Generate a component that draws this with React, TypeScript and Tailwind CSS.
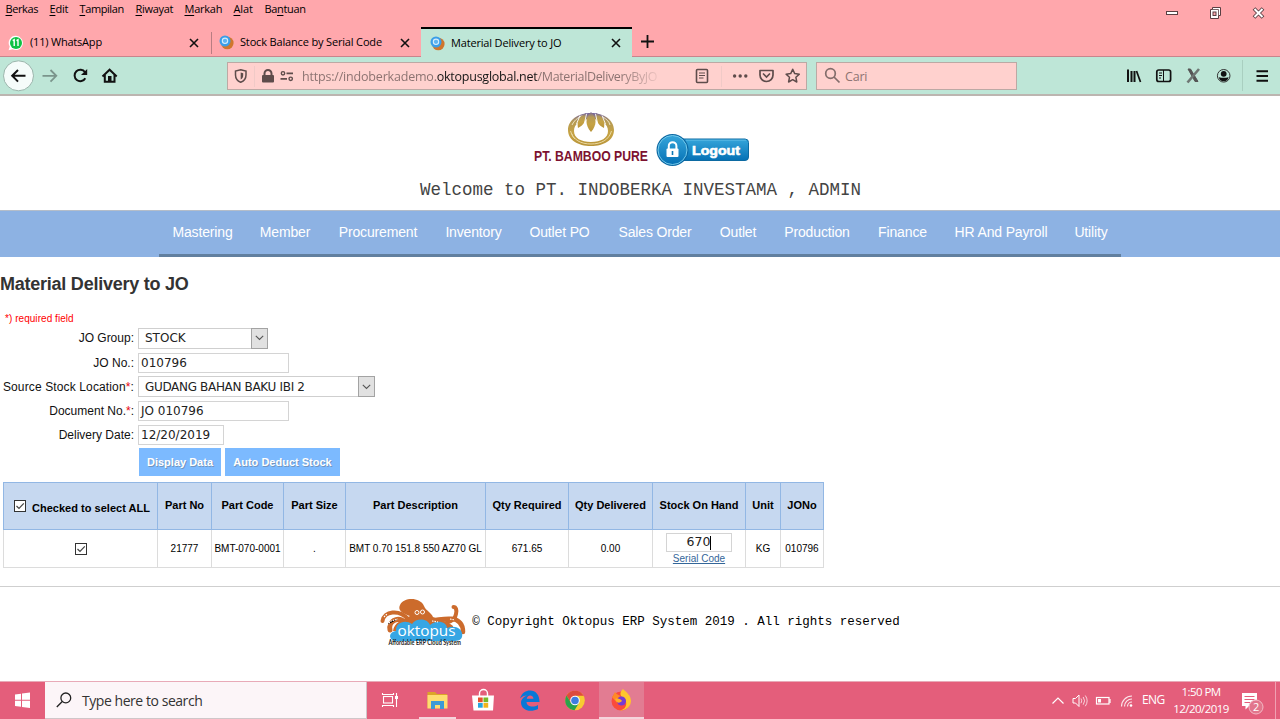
import React from "react";

const ui = "font-['Open_Sans','Noto_Sans',sans-serif]";
const arial = "font-['Liberation_Sans',Arial,sans-serif]";
const verdana = "font-['DejaVu_Sans',Verdana,sans-serif]";
const mono = "font-['Liberation_Mono','Courier_New',monospace]";

const menus = [
  { pre: "", key: "B", post: "erkas", w: "w-[44px]", t: "tracking-[-0.4px]" },
  { pre: "", key: "E", post: "dit", w: "w-[30px]", t: "tracking-[-0.2px]" },
  { pre: "", key: "T", post: "ampilan", w: "w-[56px]", t: "tracking-[-0.4px]" },
  { pre: "", key: "R", post: "iwayat", w: "w-[49px]", t: "tracking-[-0.3px]" },
  { pre: "", key: "M", post: "arkah", w: "w-[49px]", t: "tracking-[-0.25px]" },
  { pre: "", key: "A", post: "lat", w: "w-[31px]", t: "tracking-[-0.1px]" },
  { pre: "Ba", key: "n", post: "tuan", w: "w-[60px]", t: "tracking-[-0.35px]" },
];

const navItems = [
  ["Mastering", "w-[87px]"],
  ["Member", "w-[78px]"],
  ["Procurement", "w-[108px]"],
  ["Inventory", "w-[83px]"],
  ["Outlet PO", "w-[89px]"],
  ["Sales Order", "w-[102px]"],
  ["Outlet", "w-[64px]"],
  ["Production", "w-[94px]"],
  ["Finance", "w-[77px]"],
  ["HR And Payroll", "w-[120px]"],
  ["Utility", "w-[60px]"],
];

function CloseX() {
  return (
    <svg width="10" height="10" viewBox="0 0 10 10" className="shrink-0">
      <path d="M1 1L9 9M9 1L1 9" stroke="#111" strokeWidth="1.6" />
    </svg>
  );
}

function OktoFavicon() {
  return (
    <svg width="15" height="15" viewBox="0 0 15 15" className="shrink-0">
      <circle cx="8.3" cy="8" r="6.3" fill="#d0762c" />
      <circle cx="6" cy="6" r="5.5" fill="#3a9ee8" />
      <circle cx="6" cy="5.8" r="2.700" fill="#5db4f2" stroke="#d5ecfb" strokeWidth="1.1" />
    </svg>
  );
}

function Browser() {
  return (
    <header className={`${ui} h-24 w-full text-black`}>
      <div className="flex h-[27px] bg-[#ffa7ac]">
        <nav className="flex flex-1 pt-[1px] pl-[5.500px] text-[11px] leading-[15px]">
          {menus.map((m) => (
            <span key={m.key + m.post} className={`${m.w} ${m.t} whitespace-nowrap`}>
              {m.pre}
              <span className="underline underline-offset-2">{m.key}</span>
              {m.post}
            </span>
          ))}
        </nav>
        <svg width="120" height="27" viewBox="1160 0 120 27">
          <rect x="1166.500" y="11.500" width="11" height="3" fill="#fff" stroke="#5a3f43" />
          <path d="M1212.500 7.500H1220.500V15.500H1218.500V18.500H1210.500V9.500H1212.500Z" fill="#fff" stroke="#5a3f43" />
          <path d="M1212.500 9.500H1218.500V15.500" fill="none" stroke="#5a3f43" strokeWidth=".8" />
          <rect x="1213" y="12" width="3" height="3.500" fill="#ffa7ac" stroke="#5a3f43" />
          <path d="M1254 8.500L1263 17.500M1263 8.500L1254 17.500" stroke="#5a3f43" strokeWidth="3.800" />
          <path d="M1254.500 9L1262.500 17M1262.500 9L1254.500 17" stroke="#fff" strokeWidth="2" />
        </svg>
      </div>

      <div className="flex h-[30px] border-b border-[#c9848c] bg-[#ffa7ac] text-[11px]">
        <div className="flex w-[211px] items-center pl-2 pr-[12px] pt-[2px]">
          <svg width="16" height="16" viewBox="0 0 16 16">
            <path d="M8 .8A7.100 7.100 0 1 1 4.500 14.200L.6 15.200L1.700 11.500A7.100 7.100 0 0 1 8 .8Z" fill="#fff" />
            <circle cx="8" cy="7.900" r="6" fill="#0fc143" />
            <path d="M4.700 5.700L6.200 4.800V11M8.500 5.700L10 4.800V11" fill="none" stroke="#fff" strokeWidth="1.400" />
          </svg>
          <span className="ml-[6px] flex-1 whitespace-nowrap tracking-[-0.2px]">(11) WhatsApp</span>
          <CloseX />
        </div>
        <div className="flex w-[210px] items-center pr-[11px] pt-[2px]">
          <span className="h-[22px] w-px bg-[#b87d82]" />
          <span className="ml-[7px]">
            <OktoFavicon />
          </span>
          <span className="ml-[6px] flex-1 whitespace-nowrap tracking-[-0.16px]">Stock Balance by Serial Code</span>
          <CloseX />
        </div>
        <div className="-mb-px flex h-[30px] w-[211px] items-center border-t-2 border-black bg-[#bee6d7] pl-[9px] pr-[11px]">
          <OktoFavicon />
          <span className="ml-[6px] flex-1 whitespace-nowrap tracking-[-0.17px]">Material Delivery to JO</span>
          <CloseX />
        </div>
        <svg width="30" height="29" viewBox="0 0 30 29">
          <path d="M15.500 8V21M9 14.500H22" stroke="#111" strokeWidth="1.800" />
        </svg>
      </div>

      <div className="flex h-[39px] items-center border-b-2 border-[#bcb5b0] bg-[#bee6d7]">
        <svg width="227" height="37" viewBox="0 57 227 37" fill="none" stroke="#111">
          <circle cx="18.500" cy="75.800" r="15" fill="#f5fcfa" stroke="#9ab5ab" />
          <path d="M25.500 75.800H12.500M18 70L12.200 75.800L18 81.600" strokeWidth="2" />
          <path d="M42.500 75.800H56M50.500 70L56.300 75.800L50.500 81.600" stroke="#7b958c" strokeWidth="1.800" />
          <path d="M85 72.200A5.700 5.700 0 1 0 85.300 78.200" strokeWidth="2" />
          <path d="M87.200 69V75H81Z" fill="#111" stroke="none" />
          <path d="M102.500 76.500L109.600 69.700L116.700 76.500" strokeWidth="2" />
          <path d="M104.800 75V81.800H114.500V75" strokeWidth="2" />
          <rect x="108" y="76" width="3.500" height="6" fill="#111" stroke="none" />
        </svg>
        <div className="flex h-[28px] w-[580px] shrink-0 items-center border border-[#bca9a4] bg-[#ffd1ce]">
          <svg width="74" height="26" viewBox="228 63 74 26" fill="none" stroke="#5e4c4b">
            <path d="M240.700 69.700L246 71V75C246 79 243.500 81.200 240.700 82.300C238 81.200 235.500 79 235.500 75V71Z" strokeWidth="1.500" />
            <path d="M240.700 72.500V79.500C242.500 78.500 243.200 77 243.200 75V73.200Z" fill="#5e4c4b" stroke="none" />
            <path d="M254.500 66V87" stroke="#f0cac7" />
            <rect x="262" y="75" width="12" height="7.500" rx="1" fill="#5e4c4b" stroke="none" />
            <path d="M264.500 75.500V73.500A3.500 3.500 0 0 1 271.500 73.500V75.500" strokeWidth="2" />
            <circle cx="283" cy="73.300" r="1.700" strokeWidth="1.400" />
            <circle cx="290.700" cy="78.800" r="1.700" strokeWidth="1.400" />
            <path d="M286.500 73.300H293M280.500 78.800H287" strokeWidth="1.800" />
          </svg>
          <div className="w-[361px] overflow-hidden whitespace-nowrap pt-[3px] text-[12.500px] text-[#8d7472] [mask-image:linear-gradient(to_right,black_88%,transparent)]">
            <span className="tracking-[-0.19px]">https://indoberkademo.</span>
            <span className="tracking-[-0.25px] text-[#151515]">oktopusglobal.net</span>
            <span className="tracking-[-0.35px]">/MaterialDeliveryByJO</span>
          </div>
          <svg width="143" height="26" viewBox="663 63 143 26" fill="none" stroke="#5e4c4b">
            <rect x="696.500" y="69.500" width="11" height="13" rx="1" strokeWidth="1.600" />
            <path d="M699 73H705M699 75.500H705M699 78H703.500" strokeWidth="1" />
            <path d="M721.500 66V87" stroke="#f0cac7" />
            <g fill="#5e4c4b" stroke="none">
              <circle cx="734.600" cy="76" r="1.700" />
              <circle cx="740.200" cy="76" r="1.700" />
              <circle cx="745.800" cy="76" r="1.700" />
            </g>
            <path d="M760 70.500H773V75A6.500 6.500 0 0 1 760 75Z" strokeWidth="1.700" strokeLinejoin="round" />
            <path d="M763.500 74L766.500 77L769.500 74" strokeWidth="1.700" strokeLinecap="round" />
            <path d="M792.700 69.300L794.700 73.600L799.300 74.200L795.900 77.300L796.800 82L792.700 79.700L788.600 82L789.500 77.300L786.100 74.200L790.700 73.600Z" strokeWidth="1.500" strokeLinejoin="round" />
          </svg>
        </div>
        <div className="ml-[9px] flex h-[28px] w-[201px] shrink-0 items-center border border-[#bca9a4] bg-[#ffd1ce] pl-[7px]">
          <svg width="17" height="17" viewBox="0 0 17 17" fill="none" stroke="#836d6b" strokeWidth="1.700">
            <circle cx="6.500" cy="6.500" r="4.800" />
            <path d="M10 10L15.500 15.500" />
          </svg>
          <span className="ml-[4px] pt-[3px] text-[12.500px] tracking-[-0.2px] text-[#8d7472]">Cari</span>
        </div>
        <svg width="263" height="37" viewBox="1017 57 263 37" fill="none" stroke="#111">
          <path d="M1128 69.500V82M1131.500 71V82M1134.500 71V82" strokeWidth="2" />
          <path d="M1136.500 71L1140.500 82" strokeWidth="1.700" />
          <rect x="1156.800" y="70" width="13.800" height="11.500" rx="2" strokeWidth="1.700" />
          <path d="M1163.500 70V81M1159 73H1162M1159 75.500H1162M1159 78H1161" strokeWidth="1" />
          <path d="M1188 69H1190.500L1198 81.500H1195Z" fill="#555" stroke="#555" />
          <path d="M1199 69L1187.500 82.500" stroke="#6f7774" strokeWidth="2.600" />
          <circle cx="1223.700" cy="75.800" r="6.300" stroke="#333" strokeWidth="1" />
          <circle cx="1223.700" cy="73.800" r="2.900" fill="#111" stroke="none" />
          <path d="M1218.800 77.200Q1223.700 78.500 1228.600 77.200A5 5 0 0 1 1218.800 77.200Z" fill="#111" stroke="none" />
          <path d="M1242.500 60V91" stroke="#a9cfc0" />
          <path d="M1256.500 71.200H1268M1256.500 76H1268M1256.500 80.800H1268" strokeWidth="1.900" />
        </svg>
      </div>
    </header>
  );
}

function BambooLogo() {
  return (
    <svg width="48" height="36" viewBox="0 0 48 36">
      <defs>
        <linearGradient id="gold" x1="0" y1="0" x2="0" y2="1">
          <stop offset="0" stopColor="#75659f" />
          <stop offset=".25" stopColor="#b59a55" />
          <stop offset=".6" stopColor="#c6a344" />
          <stop offset="1" stopColor="#b8943a" />
        </linearGradient>
      </defs>
      <path fillRule="evenodd" d="M24 1C37 1 47 8 47 18S37 34 24 34S1 28 1 18S11 1 24 1ZM24 7C13 7 7 12 7 19C7 26 14 30 24 30S41 26 41 19C41 12 35 7 24 7Z" fill="url(#gold)" />
      <path d="M3.500 19C6 28 14 32 24 32S42 28 44.500 19M5 22C5 24 7 26 8 27" fill="none" stroke="#ead9a0" strokeWidth="1" />
      <path d="M5 13C8 7 13 4 18 3M43 13C42 9 39 7 36 5" fill="none" stroke="#efe4c2" strokeWidth="1" />
      <path d="M24 0C18 6 18 13 24 20C30 13 30 6 24 0Z" fill="url(#gold)" />
      <path d="M19 1C11 5 10 10 11 16C17 13 20 8 19 1ZM29 1C37 5 38 10 37 16C31 13 28 8 29 1Z" fill="url(#gold)" />
      <path d="M19.500 2L17.500 11M28.500 2L30.500 11M13 3.500L9.500 12M35 3.500L38.500 12" stroke="#fff" strokeWidth=".9" />
    </svg>
  );
}

function LogoutButton() {
  return (
    <svg width="94" height="34" viewBox="0 0 94 34">
      <defs>
        <linearGradient id="lg" x1="0" y1="0" x2="0" y2="1">
          <stop offset="0" stopColor="#35a5da" />
          <stop offset="1" stopColor="#0571b5" />
        </linearGradient>
      </defs>
      <rect x="20" y="6" width="72.500" height="21.500" rx="3.500" fill="url(#lg)" stroke="#0c6aa2" />
      <path d="M30 7.200H90" stroke="#64c0e8" strokeWidth=".8" />
      <circle cx="16.500" cy="17" r="16" fill="#0b68a3" />
      <circle cx="16.500" cy="17" r="14.500" fill="url(#lg)" stroke="#7fd2f1" strokeWidth=".9" />
      <rect x="10.500" y="15.500" width="12" height="8.500" rx="1" fill="#fff" />
      <path d="M12.800 16V13A3.800 3.800 0 0 1 20.400 13V16" fill="none" stroke="#fff" strokeWidth="2" />
      <path d="M16.500 18V22" stroke="#0d78b6" strokeWidth="1.600" />
      <text x="36" y="21.500" fill="#fff" stroke="#fff" strokeWidth=".6" className={arial} fontWeight="700" fontSize="12.500" textLength="48" lengthAdjust="spacingAndGlyphs">Logout</text>
    </svg>
  );
}

function OktopusLogo() {
  return (
    <svg width="88" height="50" viewBox="380 597 88 50">
      <g fill="none" stroke="#cc6b2c" strokeLinecap="round">
        <path d="M408 619C399 609 384 611 382.500 621" strokeWidth="4" />
        <path d="M406 623C397 615 388 622 390 630" strokeWidth="5" />
        <path d="M424 621C440 628 455 622 456 614C457 610 456 607 453.500 607" strokeWidth="4" />
        <path d="M424 622C444 618 463 614 463 632" strokeWidth="4.500" />
      </g>
      <path d="M400 605C404 597 420 597 424 606C426 611 431 612 433 617C440 620 447 621 453 626V631H393C394 622 403 620 410 616C404 614 397 611 400 605Z" fill="#cc6b2c" />
      <path d="M397 641C388 641 388 632 396 631C395 623 405 619 412 624C416 618 427 618 430 625C437 619 447 622 447 628C456 624 464 630 462 637C461 641 456 641 452 641Z" fill="#36a6e4" />
      <g stroke="#fff" strokeWidth="1" fill="#cc6b2c">
        <circle cx="417" cy="612.500" r="2" />
        <circle cx="422.500" cy="612" r="2" />
      </g>
      <path d="M384 617L387 614M387 625L391 621L398 619M452 613H454M450 619L455 620M432 621L438 622" stroke="#fff" strokeWidth="1.200" strokeDasharray="1.500 1" />
      <text x="397.500" y="635.500" fill="#fff" className={ui} fontWeight="500" fontSize="15" textLength="58" lengthAdjust="spacingAndGlyphs">oktopus</text>
      <text x="388.500" y="645" fill="#222" className="font-['Lato',sans-serif]" fontWeight="700" fontSize="6.500" textLength="72.500" lengthAdjust="spacingAndGlyphs">Affordable ERP Cloud System</text>
    </svg>
  );
}

function Select({ value, width, tracking = "" }: { value: string; width: string; tracking?: string }) {
  return (
    <div className={`${verdana} ${width} ${tracking} flex h-[21px] items-center border border-[#cfcfcf] bg-white pl-[6px] text-[12px] text-[#222]`}>
      <span className="flex-1 whitespace-nowrap">{value}</span>
      <span className="-my-px -mr-px flex h-[21px] w-[17px] items-center justify-center border border-[#a3a3a3] bg-[#e1e1e1]">
        <svg width="9" height="6" viewBox="0 0 9 6">
          <path d="M.8.8L4.500 4.500L8.200.8" fill="none" stroke="#555" strokeWidth="1.100" />
        </svg>
      </span>
    </div>
  );
}

function Field({ value, width }: { value: string; width: string }) {
  return (
    <div className={`${verdana} ${width} flex h-[20px] items-center whitespace-nowrap border border-[#d4d4d4] bg-white pl-[2px] text-[12px] text-[#222]`}>
      {value}
    </div>
  );
}

function Row({ label, required, h, tracking = "", children }: { label: string; required?: boolean; h: string; tracking?: string; children: React.ReactNode }) {
  return (
    <div className={`flex items-center ${h}`}>
      <div className={`${tracking} w-[134px] whitespace-nowrap text-right text-[12px] text-[#111]`}>
        {label}
        {required && <span className="text-red-600">*</span>}:
      </div>
      <div className="ml-[4px]">{children}</div>
    </div>
  );
}

function Check() {
  return (
    <svg width="12" height="12" viewBox="0 0 12 12" className="shrink-0">
      <rect x=".5" y=".5" width="11" height="11" fill="#fff" stroke="#333" />
      <path d="M2.500 6L5 8.500L9.800 3.300" fill="none" stroke="#444" strokeWidth="1.200" />
    </svg>
  );
}

const headers = ["Part No", "Part Code", "Part Size", "Part Description", "Qty Required", "Qty Delivered", "Stock On Hand", "Unit", "JONo"];
const grid = "grid w-[821px] grid-cols-[154px_54px_72px_62px_140px_83px_84px_93px_35px_43px]";
const th = "flex items-center justify-center border-l border-[#92b7e4] whitespace-nowrap";
const td = "flex items-center justify-center border-l border-[#dcdcdc] whitespace-nowrap";

function StockTable() {
  return (
    <div className={`${arial} ml-[3px] mt-[6px]`}>
      <div className={`${grid} h-[48px] border-y border-r border-[#92b7e4] bg-[#c6d8f0] pb-px text-[11px] font-bold text-black`}>
        <div className={`${th} -mb-px pl-[3px]`}>
          <Check />
          <span className="ml-[6px] mt-[5px] tracking-[0.02px]">Checked to select ALL</span>
        </div>
        {headers.map((h) => (
          <div key={h} className={`${th} -mb-px pb-px`}>
            {h}
          </div>
        ))}
      </div>
      <div className={`${grid} h-[38px] border-b border-r border-[#dcdcdc] text-[10px] text-black`}>
        <div className={td}>
          <Check />
        </div>
        <div className={td}>21777</div>
        <div className={td}>BMT-070-0001</div>
        <div className={td}>.</div>
        <div className={td}>BMT 0.70 151.8 550 AZ70 GL</div>
        <div className={td}>671.65</div>
        <div className={td}>0.00</div>
        <div className={`${td} flex-col`}>
          <div className={`${verdana} flex h-[19px] w-[66px] items-center justify-center border border-[#d4d4d4] pt-px text-[12.500px] leading-none text-[#222]`}>
            670
            <span className="h-[14px] w-px bg-black" />
          </div>
          <span className="text-[10px] leading-[13px] text-[#336699] underline">Serial Code</span>
        </div>
        <div className={td}>KG</div>
        <div className={td}>010796</div>
      </div>
    </div>
  );
}

const btn = "flex h-[28px] items-center justify-center whitespace-nowrap bg-[#7cbaff] text-[11px] font-bold text-white [text-shadow:1px_1px_0_#7295bd]";

function ErpPage() {
  return (
    <main className={`${arial} h-[585px] bg-white`}>
      <div className="flex h-[76px] justify-center pl-[2px] pt-[16px]">
        <div className="mr-[6px] flex w-[117px] flex-col items-center">
          <BambooLogo />
          <svg width="117" height="17" viewBox="0 0 117 17" className="overflow-visible">
            <text x="1" y="13" className={arial} fontWeight="700" fontSize="14" fill="#7d1230" textLength="114" lengthAdjust="spacingAndGlyphs">PT. BAMBOO PURE</text>
          </svg>
        </div>
        <div className="pt-[21px]">
          <LogoutButton />
        </div>
      </div>
      <div className={`${mono} flex h-[38px] items-center justify-center whitespace-pre pb-[1px] pl-px text-[17.500px] text-[#444]`}>
        Welcome to PT. INDOBERKA INVESTAMA , ADMIN
      </div>
      <nav className="flex h-[47px] justify-center border-t border-[#b4bdc9] bg-[#8db2e3]">
        <div className="flex h-[46px] w-[962px] border-b-[3px] border-[#617f9f]">
          {navItems.map(([label, w]) => (
            <div key={label} className={`${w} flex shrink-0 items-center justify-center whitespace-nowrap pb-px text-[14px] tracking-[-0.15px] text-white`}>
              {label}
            </div>
          ))}
        </div>
      </nav>
      <h1 className="flex h-[54px] items-center pt-px text-[18px] font-bold tracking-[-0.24px] text-[#333]">Material Delivery to JO</h1>
      <div className="flex h-[14px] items-center pl-[5px] text-[10px] tracking-[0.05px] text-[#ff0000]">*) required field</div>
      <Row label="JO Group" h="h-[26px]">
        <Select value="STOCK" width="w-[130px]" />
      </Row>
      <Row label="JO No." h="h-[23px]">
        <Field value="010796" width="w-[151px]" />
      </Row>
      <Row label="Source Stock Location" required h="h-[25px]" tracking="tracking-[0.13px]">
        <Select value="GUDANG BAHAN BAKU IBI 2" width="w-[237px]" tracking="tracking-[-0.33px]" />
      </Row>
      <Row label="Document No." required h="h-[24px]">
        <Field value="JO 010796" width="w-[151px]" />
      </Row>
      <Row label="Delivery Date" h="h-[23px]">
        <Field value="12/20/2019" width="w-[86px]" />
      </Row>
      <div className="ml-[139px] mt-[2px] flex gap-[4px]">
        <div className={`${btn} w-[82px]`}>Display Data</div>
        <div className={`${btn} w-[115px]`}>Auto Deduct Stock</div>
      </div>
      <StockTable />
      <footer className="mt-[18px] flex h-[74px] justify-center border-t border-[#cfcfcf] pt-[10px]">
        <OktopusLogo />
        <div className={`${mono} ml-[4px] mt-[17px] whitespace-pre text-[12.500px] leading-[17px] text-black`}>
          © Copyright Oktopus ERP System 2019 . All rights reserved
        </div>
      </footer>
    </main>
  );
}

function Taskbar() {
  return (
    <footer className={`${ui} flex h-[38px] border-t border-[#e8aab8] bg-[#e45e7b]`}>
      <svg width="45" height="37" viewBox="0 682 45 37" fill="#fff">
        <path d="M15 694.500L21 693.700V699.700H15ZM22 693.500L30 692.500V699.700H22ZM15 700.700H21V706.700L15 706ZM22 700.700H30V708L22 707Z" />
      </svg>
      <div className="flex w-[322px] items-center border-b border-r border-[#cfc6c9] bg-[#fcf5f8] pl-[11px]">
        <svg width="16" height="16" viewBox="0 0 16 16" fill="none" stroke="#222" strokeWidth="1.300">
          <circle cx="9.800" cy="5.900" r="4.900" />
          <path d="M6.300 9.500L.8 15" />
        </svg>
        <span className="ml-[10px] whitespace-nowrap text-[14px] tracking-[-0.45px] text-[#333]">Type here to search</span>
      </div>
      <svg width="277" height="37" viewBox="367 682 277 37">
        <rect x="599" y="682" width="45" height="37" fill="#e27c92" />
        <g fill="none" stroke="#fff" strokeWidth="1.100">
          <rect x="383.500" y="696.500" width="9" height="6.500" />
          <path d="M382.500 693V694.500H393.500V693M382.500 707V705.500H393.500V707M396.500 693V707" />
        </g>
        <rect x="395" y="696" width="3" height="3" fill="#fff" />
        <path d="M427.500 692H435L437 694H447V708H427.500Z" fill="#dca528" />
        <rect x="427.500" y="695" width="20" height="13.500" fill="#fedd70" />
        <path d="M431 701H444V709H440V705H435V709H431Z" fill="#3d9ad6" />
        <rect x="419" y="717" width="37" height="2" fill="#f5d5dc" />
        <path d="M479.500 696V693.500A4 4 0 0 1 487.500 693.500V696" fill="none" stroke="#fff" strokeWidth="1.400" />
        <path d="M472 695.500H494L493 710.500H473.500Z" fill="#fff" />
        <rect x="478" y="697.500" width="4.700" height="4.700" fill="#e8502d" />
        <rect x="483.500" y="697.500" width="4.700" height="4.700" fill="#79b828" />
        <rect x="478" y="703" width="4.700" height="4.700" fill="#27a4df" />
        <rect x="483.500" y="703" width="4.700" height="4.700" fill="#f2b41c" />
        <path d="M520 698.500C522 692.500 526 690.500 530 690.500C536 690.500 539.500 695 539.500 702H526.500C527 707.500 534 707.500 538 705V709C530 713 521 710 521 702.500C521 699.500 524 696.500 527 695.500C524 695.500 522 696.500 520 698.500ZM526.800 698.700H533.500C533 694.500 527.500 694.500 526.800 698.700Z" fill="#0878d7" />
        <circle cx="575" cy="700.500" r="9.800" fill="#f8cb32" />
        <path d="M566.500 695.500A9.800 9.800 0 0 1 583.600 695.800H575L571 703Z" fill="#dd4b3e" />
        <path d="M566.500 695.600A9.800 9.800 0 0 0 574.500 710.300L579 703L571 703Z" fill="#2ba24c" />
        <circle cx="575" cy="700.500" r="4.800" fill="#fff" />
        <circle cx="575" cy="700.500" r="3.800" fill="#3f7de0" />
        <circle cx="621" cy="701" r="9.500" fill="#fb4b3b" />
        <path d="M623 689C626 692 631 695 631 701A10 10 0 0 1 620 710.500C628 709 628 700 622 697C619 694 621 691 623 689Z" fill="#ffc62d" />
        <path d="M612 697C614 695 614 693 615 692C617 695 619 695 621 696C617 698 616 701 618 704Z" fill="#ff8a27" />
        <circle cx="621.500" cy="701" r="4.500" fill="#773bd4" />
        <path d="M615 699C618 698 621 699 622 701C620 703 618 703 617 702Z" fill="#ffb028" />
        <rect x="599" y="717" width="45" height="2" fill="#f5d5dc" />
      </svg>
      <div className="flex-1" />
      <svg width="100" height="37" viewBox="1040 682 100 37" fill="none" stroke="#fff" strokeWidth="1.200">
        <path d="M1052.500 703.500L1058 698L1063.500 703.500" />
        <path d="M1073 698.500H1075.500L1079 695V706.500L1075.500 703H1073Z" strokeWidth="1" />
        <path d="M1081 698.500Q1082.500 700.800 1081 703.200M1083.200 697Q1086 700.800 1083.200 704.700M1085.300 695.500Q1089 700.800 1085.300 706.200" strokeWidth=".9" opacity=".8" />
        <rect x="1096.500" y="697.500" width="12.500" height="6.500" />
        <path d="M1110 699V703" />
        <rect x="1098" y="699" width="3" height="3.500" fill="#fff" stroke="none" />
        <path d="M1121.500 706.500A10.500 10.500 0 0 1 1132 696M1124.500 706.500A7.500 7.500 0 0 1 1132 699M1127.500 706.500A4.500 4.500 0 0 1 1132 702" opacity=".85" />
        <circle cx="1131" cy="705.500" r="1.300" fill="#fff" stroke="none" />
      </svg>
      <span className="flex w-[33px] items-center pb-px pl-[2px] text-[12px] tracking-[-0.6px] text-white">ENG</span>
      <div className="flex w-[56px] flex-col items-center whitespace-nowrap text-[11.500px] leading-[17px] tracking-[-0.55px] text-white">
        <span className="pt-px">1:50 PM</span>
        <span>12/20/2019</span>
      </div>
      <svg width="51" height="37" viewBox="1229 682 51 37">
        <path d="M1242 693H1257V706H1249L1245.500 709.500V706H1242Z" fill="#fff" />
        <path d="M1244.500 696.500H1254.500M1244.500 699.500H1254.500M1244.500 702.500H1250" stroke="#e45e7b" strokeWidth="1" />
        <circle cx="1256" cy="707" r="7" fill="#e2768c" stroke="#f3b9c5" />
        <text x="1253" y="711" fill="#fff" fontSize="11" className={ui}>2</text>
        <path d="M1275.500 682V719" stroke="#f0a0b2" />
      </svg>
    </footer>
  );
}

export default function App() {
  return (
    <div className="h-[719px] w-[1280px] overflow-hidden bg-white">
      <Browser />
      <ErpPage />
      <Taskbar />
    </div>
  );
}
